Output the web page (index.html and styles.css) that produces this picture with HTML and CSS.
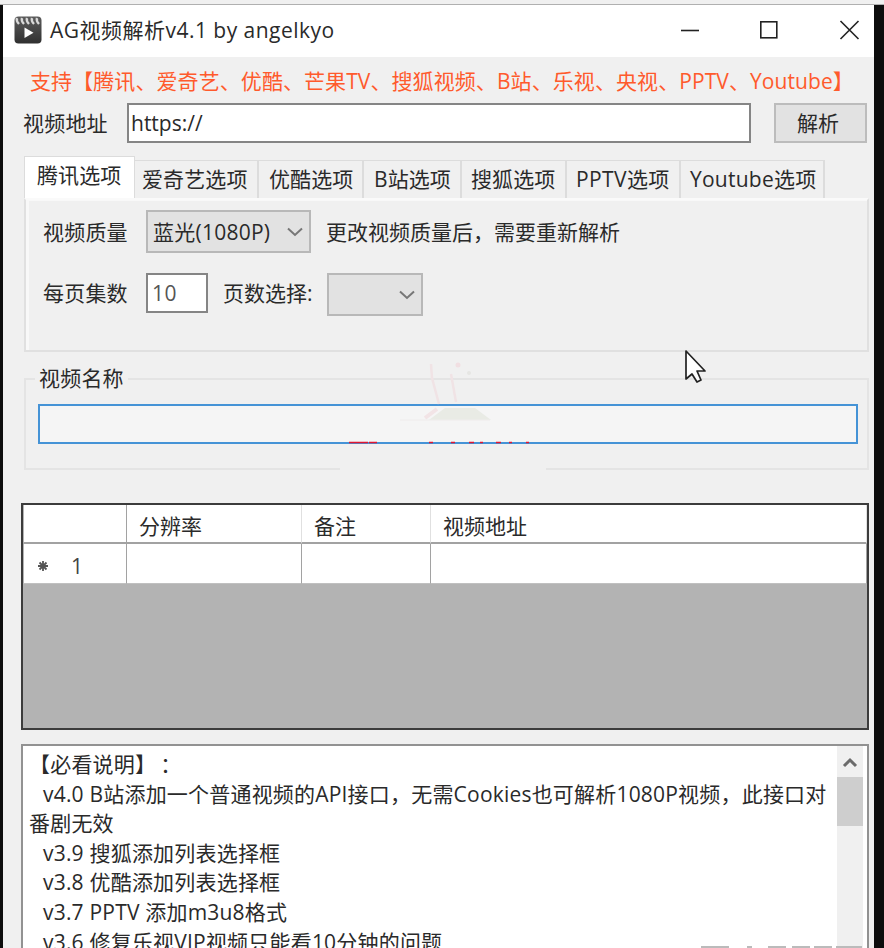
FILE: index.html
```html
<!DOCTYPE html>
<html lang="zh-CN">
<head>
<meta charset="utf-8">
<title>AG视频解析v4.1 by angelkyo</title>
<link rel="stylesheet" href="styles.css">
</head>
<body>
<div class="window">
  <header class="titlebar">
    <svg class="app-icon" width="28" height="28" viewBox="0 0 28 28">
      <defs><linearGradient id="g" x1="0" y1="0" x2="0" y2="1"><stop offset="0" stop-color="#5c5c5c"/><stop offset="1" stop-color="#303030"/></linearGradient></defs>
      <rect x=".5" y=".5" width="27" height="27" rx="4" fill="url(#g)"/>
      <path d="M3 2q-1 3 2 6M8 2q-1 3 2 6M13 2q-1 3 2 6M18 2q-1 3 2 6M23 2q-1 3 2 6" fill="none" stroke="#d8d8d8" stroke-width="2.4"/>
      <path d="M10.500 11.500l9 5.200-9 5.200z" fill="#fff"/>
    </svg>
    <h1 class="title">AG视频解析v4.1 by angelkyo</h1>
    <svg class="caption-buttons" width="180" height="22" viewBox="0 0 180 22" fill="none" stroke="#222" stroke-width="1.600">
      <path d="M1 11.500h18"/>
      <rect x="80.800" y="2.800" width="16" height="16"/>
      <path d="M160.500 2l18 18M178.500 2l-18 18"/>
    </svg>
  </header>

  <p class="support">支持【腾讯、爱奇艺、优酷、芒果TV、搜狐视频、B站、乐视、央视、PPTV、Youtube】</p>

  <div class="url-row">
    <span class="url-label">视频地址</span>
    <div class="field url">https://</div>
    <button class="parse">解析</button>
  </div>

  <nav class="tabs">
    <span class="tab active">腾讯选项</span>
    <span class="tab iqiyi">爱奇艺选项</span>
    <span class="tab youku">优酷选项</span>
    <span class="tab bili">B站选项</span>
    <span class="tab sohu">搜狐选项</span>
    <span class="tab pptv">PPTV选项</span>
    <span class="tab youtube">Youtube选项</span>
  </nav>
  <section class="panel">
    <div class="option-row">
      <span class="option-label">视频质量</span>
      <div class="select quality"><span>蓝光(1080P)</span><svg width="16" height="10" viewBox="0 0 16 10"><path d="M1 1.500l7 6.500 7-6.500"/></svg></div>
      <span>更改视频质量后，需要重新解析</span>
    </div>
    <div class="option-row second">
      <span class="option-label">每页集数</span>
      <div class="field count">10</div>
      <span class="page-label">页数选择:</span>
      <div class="select page"><svg width="16" height="10" viewBox="0 0 16 10"><path d="M1 1.500l7 6.500 7-6.500"/></svg></div>
    </div>
  </section>

  <section class="name-group">
    <span class="group-label">视频名称</span>
    <div class="name-field"></div>
    <i class="border-gap"></i>
    <svg class="splash" width="190" height="90" viewBox="0 0 190 90">
      <path d="M100 48h30l16 12h-62z" fill="#e9ebe5"/>
      <path d="M86 4l1 14 7 26M106 14l5 28" fill="none" stroke="#f0e3e5" stroke-width="2.500"/>
      <circle cx="113" cy="5" r="2.500" fill="#f1dfe2"/><circle cx="124" cy="13" r="2" fill="#e6e6e3"/>
      <path d="M80 58l12-9" stroke="#f2e4e6" stroke-width="4"/>
      <path d="M55 60h90" stroke="#efecec"/>
      <path d="M1 82.500h19M21 82.500h8M81 82.500h4M103 82.500h4M121 82.500h5M132 82.500h3M148 82.500h5M161 82.500h3M178 82.500h3" transform="translate(3 0)" stroke="#df1732" stroke-width="1.600"/>
    </svg>
  </section>

  <section class="grid">
    <div class="cell head first"></div><div class="cell head">分辨率</div><div class="cell head">备注</div><div class="cell head">视频地址</div>
    <div class="cell first marker"><svg width="12" height="12" viewBox="0 0 12 12" stroke="#555" stroke-width="1.800"><path d="M6 1v10M1 6h10M2.500 2.500l7 7M9.500 2.500l-7 7"/></svg><span>1</span></div><div class="cell"></div><div class="cell"></div><div class="cell"></div>
  </section>

  <section class="notes">
    <div class="notes-text">
      <p class="heading">【必看说明】<span class="colon">：</span></p>
      <p>v4.0 B站添加一个普通视频的API接口，无需Cookies也可解析1080P视频，此接口对</p>
      <p class="wrap">番剧无效</p>
      <p>v3.9 搜狐添加列表选择框</p>
      <p>v3.8 优酷添加列表选择框</p>
      <p>v3.7 PPTV 添加m3u8格式</p>
      <p>v3.6 修复乐视VIP视频只能看10分钟的问题</p>
    </div>
    <div class="scrollbar">
      <svg width="16" height="12" viewBox="0 0 16 12"><path d="M2 10l6-6 6 6" fill="none" stroke="#6b6b6b" stroke-width="3"/></svg>
      <div class="thumb"></div>
    </div>
  </section>

  <svg class="cursor" width="24" height="36" viewBox="0 0 24 36"><path d="M2 2v28l6-5 5 8 4-2-4-9h8z" fill="#fff" stroke="#222" stroke-width="1.700" stroke-linejoin="round"/></svg>
  <svg class="edge-marks" width="166" height="3" viewBox="0 0 166 3"><path d="M1 2h28M47 2h5M68 2h18M92 2h18M114 2h18M136 2h26" stroke="#bbb" stroke-width="2"/></svg>
</div>
</body>
</html>
```
FILE: styles.css
```css
* { box-sizing: border-box; }
html, body { height: 948px; overflow: hidden; }
body {
  margin: 0;
  padding: 5px 10px 0 3px;
  background: linear-gradient(#f0f0f0 4px, #b0b0b0 4px, #b0b0b0 5px, #0d0d0d 5px);
  font: 21px/30px "Open Sans", "Noto Sans CJK SC", sans-serif;
  text-spacing-trim: space-all;
  color: #2a2a2a;
}
p, h1 { margin: 0; font: inherit; white-space: nowrap; }
svg { display: block; flex: none; }
span { white-space: nowrap; }
.window { position: relative; height: 943px; background: #f0f0f0; overflow: hidden; display: flex; flex-direction: column; }

.titlebar { flex: none; height: 52px; background: #fff; display: flex; align-items: center; padding: 0 14px 2px 11px; }
.app-icon { margin-right: 8px; }
.title { flex: 1; letter-spacing: 0.48px; }

.support { flex: none; height: 46px; padding: 9px 0 0 27px; color: #ff5a2c; letter-spacing: 0.08px; }

.url-row { flex: none; height: 40px; display: flex; align-items: center; padding: 0 7px 0 20px; }
.url-label { width: 104px; letter-spacing: 0.2px; }
.field { height: 40px; border: 2px solid #858585; background: #fff; display: flex; align-items: center; padding-left: 3px; }
.url { width: 624px; padding-left: 2px; }
.parse { margin: 0 0 0 auto; width: 93px; height: 40px; border: 2px solid #bcbcbc; background: #e2e2e2; font: inherit; color: inherit; padding: 0 5px 1px 0; }

.tabs { flex: none; height: 55px; padding: 13px 0 0 21px; display: flex; align-items: flex-end; }
.tab { height: 38px; border: 1px solid #dcdcdc; border-width: 1px 2px 0 0; padding: 3px 0 0 7px; letter-spacing: 0.1px; }
.tab.active { width: 111px; height: 42px; background: #fff; border-width: 1px 1px 0 1px; padding: 3px 0 0 12px; }
.iqiyi { width: 124px; }
.youku { width: 105px; padding-left: 10px; }
.tab.bili { width: 98px; padding-left: 10px; }
.tab.sohu { width: 105px; padding-left: 9px; }
.tab.pptv { width: 114px; padding-left: 9px; letter-spacing: 0.4px; }
.tab.youtube { width: 144px; padding-left: 9px; letter-spacing: 0.25px; }
.youku { padding-left: 10px !important; }

.panel { flex: none; height: 154px; margin: 0 5px 0 21px; border: 2px solid #e0e0e0; border-top-color: #fafafa; box-shadow: inset 3px 1px #f8f8f8; padding: 10px 0 0 17px; }
.option-row { height: 43px; display: flex; align-items: center; margin-bottom: 20px; }
.option-label { width: 103px; letter-spacing: 0.2px; }
.second .option-label, .page-label { margin-bottom: 4px; }
.select { height: 43px; border: 2px solid #b8b8b8; background: #e2e2e2; display: flex; align-items: center; justify-content: flex-end; padding-right: 6px; }
.select path { fill: none; stroke: #777; stroke-width: 2; }
.quality { width: 165px; margin-right: 15px; justify-content: space-between; padding-left: 5px; letter-spacing: 0.25px; }
.count { width: 62px; margin-right: 15px; height: 40px; margin-bottom: 3px; color: #555; padding-left: 4px; letter-spacing: 0.4px; }
.page-label { width: 104px; }
.page { width: 96px; }

.name-group { position: relative; flex: none; height: 92px; margin: 26px 5px 0 21px; border: 2px solid #e4e4e4; padding: 24px 9px 0 12px; }
.group-label { position: absolute; left: 9px; top: -17px; padding: 0 4px; background: #f0f0f0; letter-spacing: 0.2px; }
.name-field { height: 40px; border: 2px solid #4593d6; background: #f5f5f5; }
.border-gap { position: absolute; left: 314px; bottom: -2px; width: 206px; height: 2px; background: #f0f0f0; }
.splash { position: absolute; left: 319px; top: -20px; }

.grid { flex: none; height: 227px; margin: 33px 5px 0 18px; border: 2px solid #3c3c3c; background: #b3b3b3; display: grid; grid-template-columns: 104px 175px 129px 1fr; grid-template-rows: 39px 40px; align-content: start; }
.cell { background: #fff; border-right: 1px solid #a2a2a2; border-bottom: 1px solid #c0c0c0; }
.head { border-right-color: #e0e0e0; border-bottom: 2px solid #a2a2a2; padding: 6px 0 0 12px; }
.first { border-left: 1px solid #b4b4b4; border-right: 1px solid #a2a2a2; }
.marker { display: flex; align-items: center; padding: 4px 0 0 13px; gap: 22px; color: #444; }

.notes { flex: none; height: 220px; margin: 14px 5px 0 18px; border: 2px solid #929292; background: #fff; display: flex; }
.notes-text { flex: 1; padding: 4px 0 0 20px; line-height: 29.600px; letter-spacing: 0.2px; }
.heading, .wrap { margin-left: -14px; }
.colon { display: inline-block; margin-left: 4px; }
.scrollbar { width: 30px; border-right: 4px solid #fff; background: #f0f0f0; padding: 10px 0 0; }
.scrollbar svg { margin-left: 5px; }
.thumb { margin-top: 9px; height: 49px; background: #cecece; }

.cursor { position: absolute; left: 681px; top: 344px; }
.edge-marks { position: absolute; left: 697px; bottom: 0; }
```
